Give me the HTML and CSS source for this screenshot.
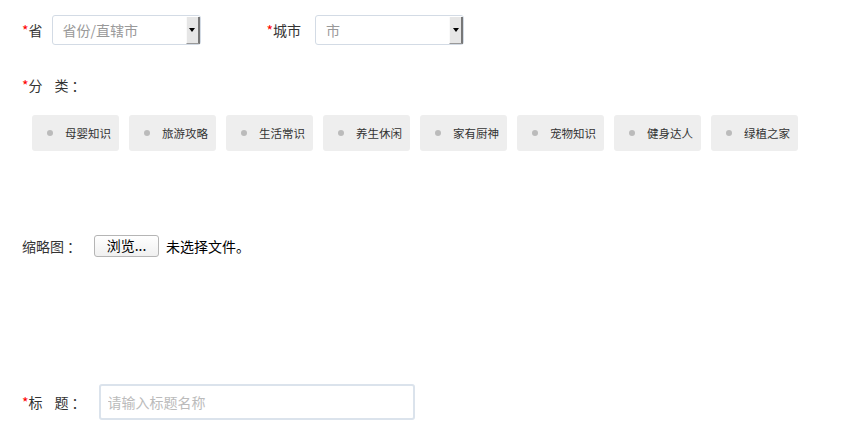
FILE: index.html
```html
<!DOCTYPE html>
<html lang="zh-CN">
<head>
    <meta charset="UTF-8">
    <meta name="viewport" content="width=device-width, initial-scale=1.0">
    <title>发布</title>
    <link rel="stylesheet" href="styles.css">
</head>
<body>
    <form class="post-form">
        <div class="row row-area">
            <label class="label"><span class="req">*</span>省</label>
            <div class="select select-province">
                <span class="select-text">省份/直辖市</span>
                <span class="select-btn"><span class="arrow"></span></span>
            </div>
            <label class="label label-city"><span class="req">*</span>城市</label>
            <div class="select select-city">
                <span class="select-text">市</span>
                <span class="select-btn"><span class="arrow"></span></span>
            </div>
        </div>

        <div class="row row-cat">
            <label class="label"><span class="req">*</span><span class="gap">分</span>类<span class="colon">：</span></label>
        </div>
        <ul class="tags">
            <li class="tag">母婴知识</li>
            <li class="tag">旅游攻略</li>
            <li class="tag">生活常识</li>
            <li class="tag">养生休闲</li>
            <li class="tag">家有厨神</li>
            <li class="tag">宠物知识</li>
            <li class="tag">健身达人</li>
            <li class="tag">绿植之家</li>
        </ul>

        <div class="row row-thumb">
            <label class="label label-thumb">缩略图<span class="colon">：</span></label>
            <span class="file-btn">浏览...</span>
            <span class="file-name">未选择文件。</span>
        </div>

        <div class="row row-title">
            <label class="label label-title"><span class="req">*</span><span class="gap">标</span>题<span class="colon">：</span></label>
            <input class="title-input" type="text" placeholder="请输入标题名称">
        </div>
    </form>
</body>
</html>
```

FILE: styles.css
```css
body {
    margin: 0;
    font-family: "Noto Sans CJK SC", "Liberation Sans", sans-serif;
    font-size: 14px;
    color: #333;
    background: #fff;
}
.post-form {
    padding: 15px 0 0 22px;
}
.row {
    display: flex;
    align-items: center;
}
.label {
    line-height: 20px;
}
.req {
    color: #f00;
}
.gap {
    margin-right: 12px;
}
.colon {
    padding-left: 3px;
}

/* province / city */
.row-area {
    height: 30px;
}
.select {
    position: relative;
    box-sizing: border-box;
    width: 149px;
    height: 30px;
    border: 1px solid #d3dbe5;
    border-radius: 3px;
    display: flex;
    align-items: center;
    padding-left: 10px;
}
.select-province {
    margin-left: 9px;
}
.label-city {
    margin-left: 66px;
}
.select-city {
    margin-left: 14px;
}
.select-text {
    color: #999;
    line-height: 20px;
}
.select-btn {
    position: absolute;
    top: 1px;
    right: 0;
    width: 14px;
    height: 27px;
    box-sizing: border-box;
    background: #e6e6e6;
    border-left: 1px solid #fafafa;
    border-right: 2px solid #777;
    border-bottom: 1px solid #999;
    display: flex;
    align-items: center;
    justify-content: center;
}
.arrow {
    width: 0;
    height: 0;
    border-left: 3px solid transparent;
    border-right: 3px solid transparent;
    border-top: 4px solid #000;
}

/* categories */
.row-cat {
    margin-top: 30px;
}
.tags {
    list-style: none;
    margin: 20px 0 0 10px;
    padding: 0;
    display: flex;
    gap: 10px;
}
.tag {
    box-sizing: border-box;
    width: 87px;
    height: 36px;
    background: #eee;
    border-radius: 3px;
    font-size: 11.5px;
    color: #333;
    display: flex;
    align-items: center;
    padding-left: 33px;
    position: relative;
}
.tag::before {
    content: "";
    position: absolute;
    left: 15px;
    top: 15px;
    width: 6px;
    height: 6px;
    border-radius: 50%;
    background: #bbb;
}

/* thumbnail */
.row-thumb {
    margin-top: 84px;
    align-items: flex-end;
}
.label-thumb {
    margin-right: 13px;
}
.file-btn {
    box-sizing: border-box;
    width: 65px;
    height: 22px;
    border: 1px solid #b5b5b5;
    border-radius: 3px;
    background: linear-gradient(#fff, #f0f0f0);
    color: #000;
    text-align: center;
    line-height: 19px;
    margin-bottom: -1px;
}
.file-name {
    margin-left: 7px;
    color: #000;
    line-height: 20px;
}

/* title */
.row-title {
    margin-top: 128px;
}
.label-title {
    margin-right: 13px;
}
.title-input {
    box-sizing: border-box;
    width: 316px;
    height: 36px;
    border: 2px solid #dbe3ec;
    border-radius: 3px;
    padding: 0 7px;
    font-family: inherit;
    font-size: 14px;
    color: #333;
    outline: none;
}
.title-input::placeholder {
    color: #bbb;
}
```
